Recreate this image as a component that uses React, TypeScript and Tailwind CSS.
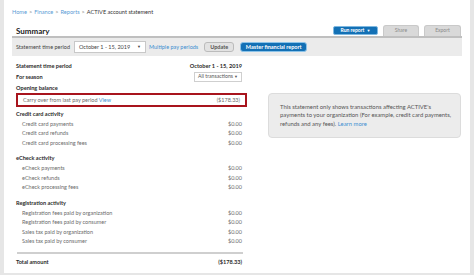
import React from "react";

const font = { fontFamily: 'Lato, "Liberation Sans", sans-serif' };

const Row = ({ label, value }: { label: string; value: string }) => (
  <div className="flex h-[9.5px] items-center justify-between whitespace-nowrap pl-[6px] pr-[5px] text-[5.5px] text-[#6b6b6b]">
    <span>{label}</span>
    <span>{value}</span>
  </div>
);

const Heading = ({ children }: { children: React.ReactNode }) => (
  <div className="flex h-[10px] items-center text-[5.6px] font-bold text-[#2b2b2b]">{children}</div>
);

export default function App() {
  return (
    <div className="h-[275px] w-[474px] overflow-hidden bg-[#e6e6e6] px-[4px]" style={font}>
      <div className="h-[273px] w-[466px] bg-white px-[8px]">
        {/* Breadcrumb */}
        <div className="flex h-[26px] items-center whitespace-nowrap pb-[2px] text-[5.6px] text-[#5a9bd5]">
          <span>Home</span>
          <span className="mx-[2px] text-[#888]">&gt;</span>
          <span>Finance</span>
          <span className="mx-[2px] text-[#888]">&gt;</span>
          <span>Reports</span>
          <span className="mx-[2px] text-[#888]">&gt;</span>
          <span className="text-[#333]">ACTIVE account statement</span>
        </div>

        {/* Header with tabs */}
        <div className="flex h-[12px] w-[450px] items-end justify-between border-b-2 border-[#bfbfbf]">
          <span className="mb-[1px] pl-[4px] text-[8px] font-bold leading-none text-[#222]">Summary</span>
          <div className="flex items-end gap-[5px] pr-[1px]">
            <div className="mb-[1px] flex h-[9px] w-[45px] items-center justify-center gap-[2px] whitespace-nowrap rounded-[2px] border border-[#7fb8e0] bg-[#1370b5] text-[5px] font-bold text-white">
              Run report <span className="text-[4px]">▼</span>
            </div>
            <div className="flex h-[11px] w-[36px] items-center justify-center rounded-t-[3px] border border-b-0 border-[#c9c9c9] bg-[#d9d9d9] text-[5px] text-[#8a8a8a]">
              Share
            </div>
            <div className="flex h-[11px] w-[37px] items-center justify-center rounded-t-[3px] border border-b-0 border-[#c9c9c9] bg-[#d9d9d9] text-[5px] text-[#8a8a8a]">
              Export
            </div>
          </div>
        </div>

        {/* Toolbar */}
        <div className="flex h-[18px] w-[450px] items-center whitespace-nowrap bg-[#ebebeb] pl-[4px] text-[5.5px]">
          <span className="text-[#444]">Statement time period</span>
          <div className="ml-[4px] flex h-[12px] w-[72px] items-center justify-between border border-[#c8c8c8] bg-white px-[4px] text-[#444]">
            <span>October 1 - 15, 2019</span>
            <span className="text-[4px]">▼</span>
          </div>
          <span className="ml-[3px] text-[#3d8fd1]">Multiple pay periods</span>
          <div className="ml-[6px] flex h-[10px] w-[30px] items-center justify-center rounded-[3px] border border-[#bbb] bg-[#e2e2e2] font-bold text-[#555]">
            Update
          </div>
          <div className="ml-[6px] flex h-[10px] w-[67px] items-center justify-center rounded-[3px] border border-[#8cc3e8] bg-[#1370b5] font-bold text-white">
            Master financial report
          </div>
        </div>

        {/* Body */}
        <div className="flex">
          <div className="ml-[4px] w-[231px] pt-[5px]">
            <div className="flex h-[10px] items-center justify-between pr-[5px] text-[5.6px] font-bold text-[#2b2b2b]">
              <span>Statement time period</span>
              <span>October 1 - 15, 2019</span>
            </div>
            <div className="flex h-[12px] items-center justify-between pr-[5px] text-[5.6px]">
              <span className="font-bold text-[#2b2b2b]">For season</span>
              <div className="flex h-[10px] w-[48px] items-center justify-between whitespace-nowrap border border-[#cfcfcf] px-[3px] text-[5.2px] text-[#555]">
                <span>All transactions</span>
                <span className="text-[4px]">▼</span>
              </div>
            </div>
            <Heading>Opening balance</Heading>
            <div className="flex h-[14px] items-center justify-between whitespace-nowrap border-2 border-[#a8141d] pl-[5px] pr-[5px] text-[5.5px] text-[#6b6b6b]">
              <span>
                Carry over from last pay period <span className="text-[#3d8fd1]">View</span>
              </span>
              <span>($178.33)</span>
            </div>

            <div className="mt-[2px]">
              <Heading>Credit card activity</Heading>
              <Row label="Credit card payments" value="$0.00" />
              <Row label="Credit card refunds" value="$0.00" />
              <Row label="Credit card processing fees" value="$0.00" />
            </div>

            <div className="mt-[6px]">
              <Heading>eCheck activity</Heading>
              <Row label="eCheck payments" value="$0.00" />
              <Row label="eCheck refunds" value="$0.00" />
              <Row label="eCheck processing fees" value="$0.00" />
            </div>

            <div className="mt-[6px]">
              <Heading>Registration activity</Heading>
              <Row label="Registration fees paid by organization" value="$0.00" />
              <Row label="Registration fees paid by consumer" value="$0.00" />
              <Row label="Sales tax paid by organization" value="$0.00" />
              <Row label="Sales tax paid by consumer" value="$0.00" />
            </div>

            <div className="ml-[1px] mr-[4px] mt-[6px] h-[2px] bg-[#cfcfcf]" />
            <div className="flex h-[16px] items-center justify-between pr-[5px] text-[5.6px] font-bold text-[#2b2b2b]">
              <span>Total amount</span>
              <span>($178.33)</span>
            </div>
          </div>

          <div className="ml-[21px] mt-[37px] flex h-[45px] w-[193px] items-center rounded-[4px] border border-[#dcdcdc] bg-[#ececec] px-[11px] text-[5.9px] leading-[8.5px] text-[#555]">
            <p className="whitespace-nowrap">
              This statement only shows transactions affecting ACTIVE's
              <br />
              payments to your organization (For example, credit card payments,
              <br />
              refunds and any fees). <span className="text-[#3d8fd1]">Learn more</span>
            </p>
          </div>
        </div>
      </div>
    </div>
  );
}
